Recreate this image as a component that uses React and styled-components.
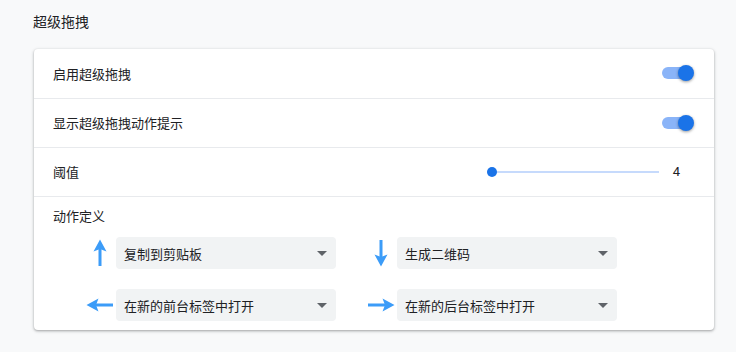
import React from "react";
import styled, { createGlobalStyle } from "styled-components";

const GlobalStyle = createGlobalStyle`
  body {
    margin: 0;
    background: #f8f9fa;
    font-family: Roboto, "Noto Sans CJK SC", sans-serif;
    color: #202124;
  }
`;

const Page = styled.div`
  width: 736px;
  height: 352px;
  box-sizing: border-box;
  padding: 11px 22px 0 34px;
`;

const SectionTitle = styled.h2`
  margin: 0 0 0 -1px;
  height: 22px;
  line-height: 22px;
  font-size: 14px;
  font-weight: 400;
`;

const Card = styled.div`
  margin-top: 16px;
  background: #fff;
  border-radius: 4px;
  box-shadow: 0 1px 2px rgba(60, 64, 67, 0.3), 0 1px 3px 1px rgba(60, 64, 67, 0.15);
`;

const Row = styled.div`
  display: flex;
  align-items: center;
  height: 49px;
  box-sizing: border-box;
  padding: 0 20px 1px 19px;
  font-size: 13px;
  border-top: ${(p) => (p.$first ? "none" : "1px solid #e8eaed")};
`;

const Label = styled.span`
  flex: 1;
`;

const Toggle = styled.div`
  position: relative;
  width: 32px;
  height: 16px;
`;

const ToggleBar = styled.div`
  position: absolute;
  left: 0;
  top: 2px;
  width: 30px;
  height: 12px;
  border-radius: 6px;
  background: #8ab4f8;
`;

const ToggleKnob = styled.div`
  position: absolute;
  right: 0;
  top: 0;
  width: 16px;
  height: 16px;
  border-radius: 50%;
  background: #1a73e8;
  box-shadow: 0 1px 3px rgba(0, 0, 0, 0.4);
`;

const Slider = styled.div`
  position: relative;
  width: 172px;
  height: 10px;
  display: flex;
  align-items: center;
`;

const SliderTrack = styled.div`
  flex: 1;
  height: 2px;
  background: #c6dafc;
`;

const SliderKnob = styled.div`
  position: absolute;
  left: 0;
  top: 0;
  width: 10px;
  height: 10px;
  border-radius: 50%;
  background: #1a73e8;
`;

const SliderValue = styled.span`
  width: 35px;
  text-align: center;
  font-size: 13px;
`;

const ActionsBlock = styled.div`
  border-top: 1px solid #e8eaed;
  padding: 10px 20px 9px 19px;
  font-size: 13px;
`;

const ActionsTitle = styled.div`
  height: 20px;
  line-height: 20px;
  margin-bottom: 10px;
`;

const ActionsGrid = styled.div`
  display: grid;
  grid-template-columns: 250px 250px;
  column-gap: 31px;
  row-gap: 20px;
  padding-left: 33px;
`;

const Action = styled.div`
  display: flex;
  align-items: center;
`;

const ArrowBox = styled.div`
  width: 28px;
  height: 32px;
  margin-right: 2px;
  display: flex;
  align-items: center;
  justify-content: center;
`;

const Select = styled.div`
  width: 220px;
  height: 32px;
  box-sizing: border-box;
  padding: 0 9px 0 8px;
  display: flex;
  align-items: center;
  background: #f1f3f4;
  border-radius: 4px;
  font-size: 13px;
`;

const SelectText = styled.span`
  flex: 1;
`;

const Caret = styled.span`
  width: 0;
  height: 0;
  border-left: 5px solid transparent;
  border-right: 5px solid transparent;
  border-top: 5px solid #5f6368;
`;

const arrowColor = "#3c9cf8";

const Arrow = ({ dir }) => {
  const rot = { up: 0, right: 90, down: 180, left: 270 }[dir];
  return (
    <svg width="28" height="28" viewBox="0 0 28 28">
      <g transform={`rotate(${rot} 14 14)`}>
        <rect x="12.5" y="9" width="3" height="18" fill={arrowColor} />
        <polygon points="14,0.5 20.5,12.5 14,10 7.5,12.5" fill={arrowColor} />
      </g>
    </svg>
  );
};

const actions = [
  { dir: "up", label: "复制到剪贴板" },
  { dir: "down", label: "生成二维码" },
  { dir: "left", label: "在新的前台标签中打开" },
  { dir: "right", label: "在新的后台标签中打开" },
];

const Switch = () => (
  <Toggle>
    <ToggleBar />
    <ToggleKnob />
  </Toggle>
);

export default function App() {
  return (
    <>
      <GlobalStyle />
      <Page>
        <SectionTitle>超级拖拽</SectionTitle>
        <Card>
          <Row $first>
            <Label>启用超级拖拽</Label>
            <Switch />
          </Row>
          <Row>
            <Label>显示超级拖拽动作提示</Label>
            <Switch />
          </Row>
          <Row>
            <Label>阈值</Label>
            <Slider>
              <SliderTrack />
              <SliderKnob />
            </Slider>
            <SliderValue>4</SliderValue>
          </Row>
          <ActionsBlock>
            <ActionsTitle>动作定义</ActionsTitle>
            <ActionsGrid>
              {actions.map((a) => (
                <Action key={a.dir}>
                  <ArrowBox>
                    <Arrow dir={a.dir} />
                  </ArrowBox>
                  <Select>
                    <SelectText>{a.label}</SelectText>
                    <Caret />
                  </Select>
                </Action>
              ))}
            </ActionsGrid>
          </ActionsBlock>
        </Card>
      </Page>
    </>
  );
}
